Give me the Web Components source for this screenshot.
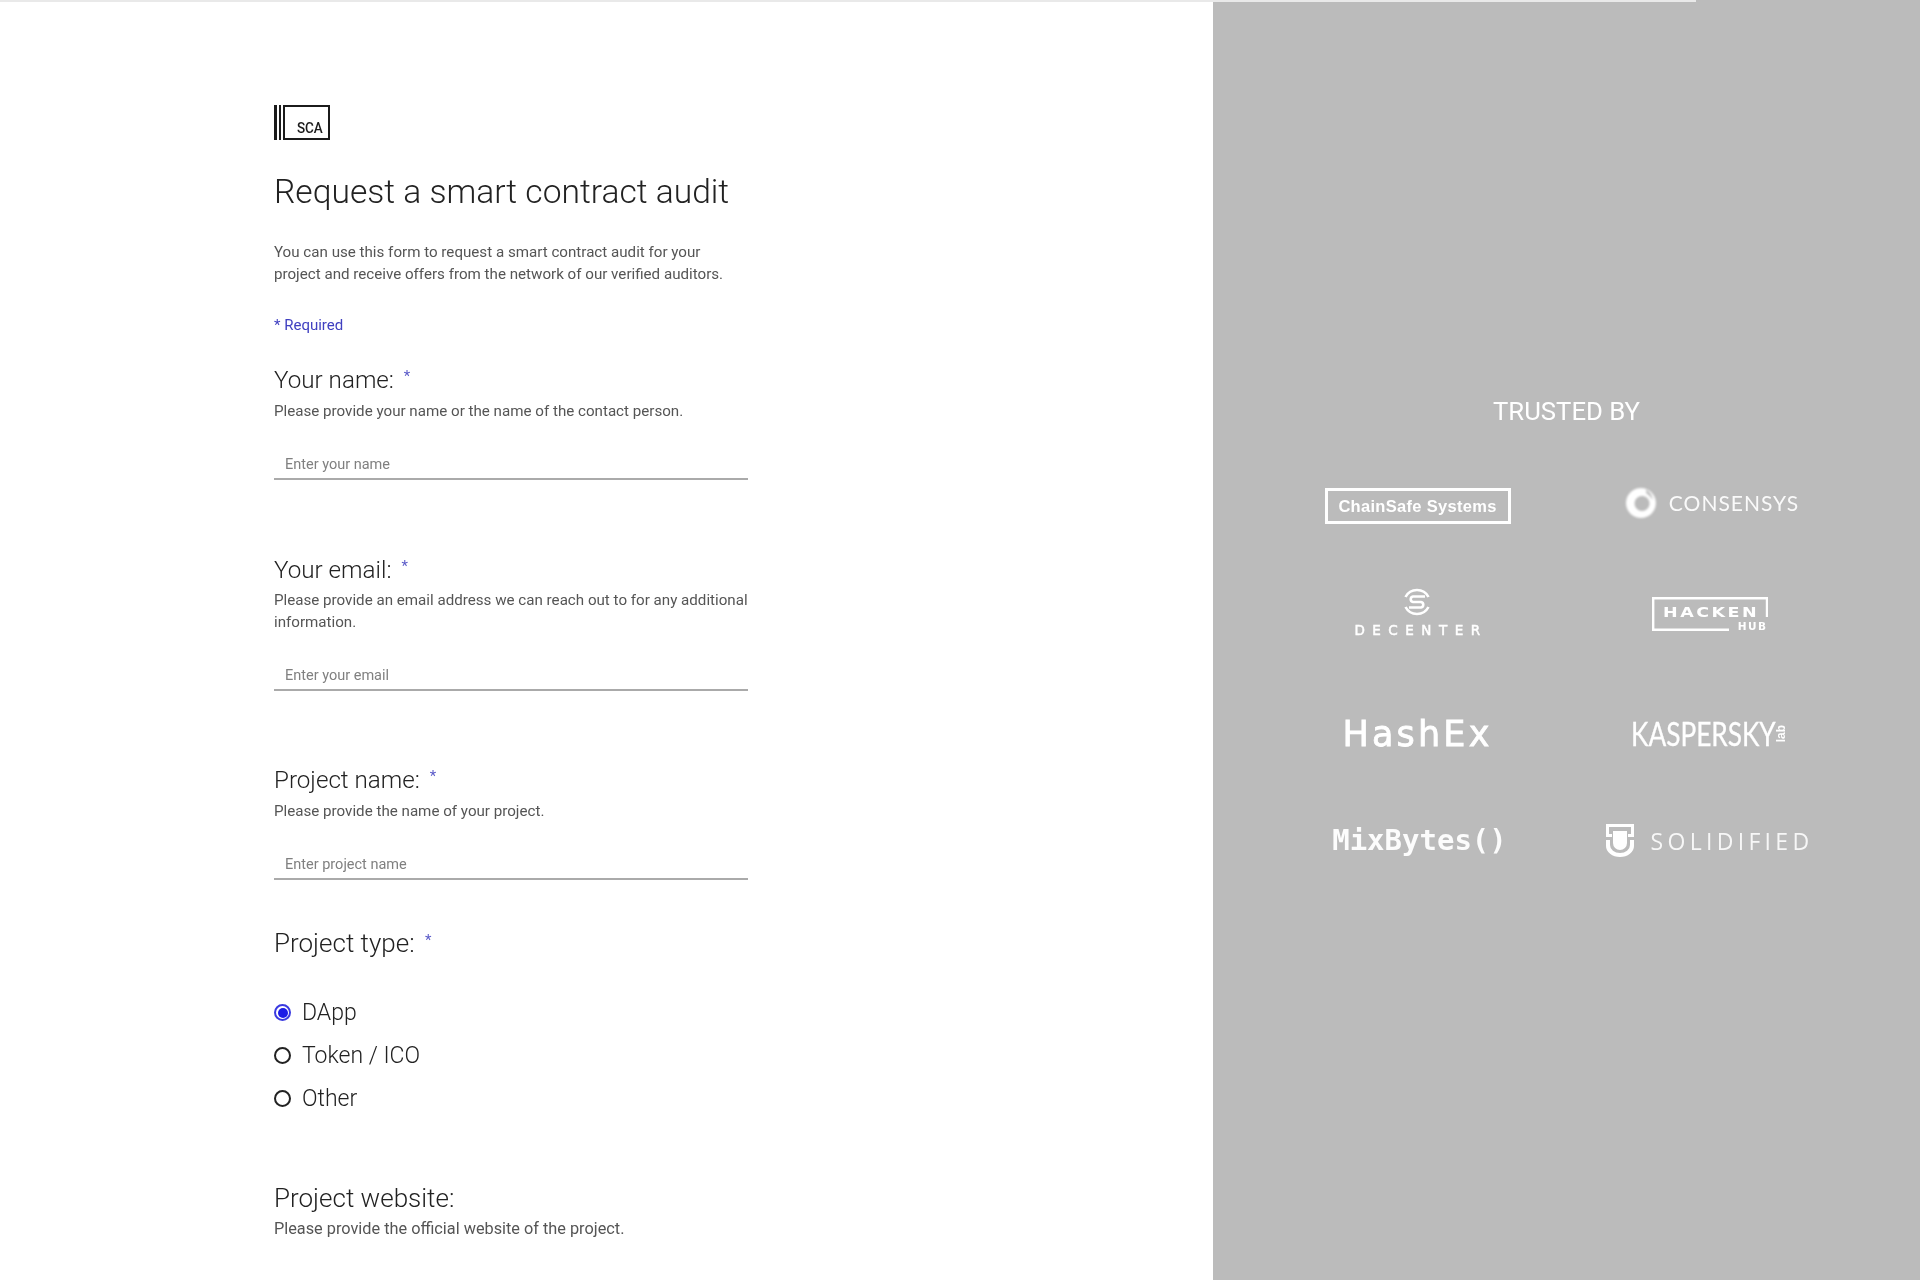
<!DOCTYPE html>
<html>
<head>
<meta charset="utf-8">
<title>Request a smart contract audit</title>
<style>
  html, body { margin: 0; height: 1280px; overflow: hidden; background: #fff; }
  body { font-family: Roboto, "Liberation Sans", sans-serif; }
</style>
</head>
<body>
<audit-page>
  <audit-form>
    <sca-logo></sca-logo>
    <form-field label="Your name:" required placeholder="Enter your name" style="--mt:28px;--after:74px">Please provide your name or the name of the contact person.</form-field>
    <form-field label="Your email:" required placeholder="Enter your email" style="--after:73px;--hint-mt:3px">Please provide an email address we can reach out to for any additional information.</form-field>
    <form-field label="Project name:" required placeholder="Enter project name" style="--after:47px">Please provide the name of your project.</form-field>
    <radio-group label="Project type:" required>
      <radio-option checked>DApp</radio-option>
      <radio-option>Token / ICO</radio-option>
      <radio-option>Other</radio-option>
    </radio-group>
    <form-field label="Project website:" no-input style="--after:0;--label:26px;--hint:16.3px">Please provide the official website of the project.</form-field>
  </audit-form>
  <trusted-panel>
    <trusted-logo name="chainsafe"></trusted-logo>
    <trusted-logo name="consensys"></trusted-logo>
    <trusted-logo name="decenter"></trusted-logo>
    <trusted-logo name="hacken"></trusted-logo>
    <trusted-logo name="hashex"></trusted-logo>
    <trusted-logo name="kaspersky"></trusted-logo>
    <trusted-logo name="mixbytes"></trusted-logo>
    <trusted-logo name="solidified"></trusted-logo>
  </trusted-panel>
</audit-page>

<script>
class AuditPage extends HTMLElement {
  constructor() {
    super();
    this.attachShadow({mode: 'open'}).innerHTML = `
      <style>
        :host { display: flex; position: relative; height: 1280px; overflow: hidden; }
        .bar { position: absolute; left: 0; top: 0; width: 1696px; height: 2px; background: #e9e9e9; z-index: 2; }
        ::slotted(audit-form) { flex: 0 0 1213px; }
        ::slotted(trusted-panel) { flex: 1; }
      </style>
      <div class="bar"></div>
      <slot></slot>
    `;
  }
}
customElements.define('audit-page', AuditPage);

class ScaLogo extends HTMLElement {
  constructor() {
    super();
    this.attachShadow({mode: 'open'}).innerHTML = `
      <style>
        :host { display: flex; width: 56px; height: 35px; }
        .stripe { width: 2.500px; background: #1b1b1b; margin-right: 2px; }
        .box { flex: 1; border: 2px solid #1b1b1b; display: flex; align-items: flex-end; justify-content: flex-end; padding: 0 5px 1px 0; box-sizing: border-box; }
        span { font: 500 15px/17px Roboto, sans-serif; color: #1b1b1b; transform: scaleX(.9); transform-origin: right; }
      </style>
      <div class="stripe"></div><div class="stripe"></div>
      <div class="box"><span>SCA</span></div>
    `;
  }
}
customElements.define('sca-logo', ScaLogo);

class AuditForm extends HTMLElement {
  constructor() {
    super();
    this.attachShadow({mode: 'open'}).innerHTML = `
      <style>
        :host { display: block; padding: 105px 0 0 274px; box-sizing: border-box; height: 1280px; overflow: hidden; background: #fff; filter: blur(.3px); }
        .col { width: 474px; }
        h1 { font: 300 33.600px/44px Roboto, sans-serif; color: #222; margin: 30px 0 0; }
        p { font: 400 15.150px/22px Roboto, sans-serif; color: #555; margin: 27px 0 0; }
        .req { font: 400 15px/22px Roboto, sans-serif; color: #4040c0; margin-top: 29px; }
      </style>
      <div class="col">
        <slot name="logo"></slot>
        <h1>Request a smart contract audit</h1>
        <p>You can use this form to request a smart contract audit for your project and receive offers from the network of our verified auditors.</p>
        <div class="req">* Required</div>
        <slot></slot>
      </div>
    `;
  }
  connectedCallback() {
    const logo = this.querySelector('sca-logo');
    if (logo) logo.slot = 'logo';
  }
}
customElements.define('audit-form', AuditForm);

class FormField extends HTMLElement {
  constructor() {
    super();
    this.attachShadow({mode: 'open'});
  }
  connectedCallback() {
    const req = this.hasAttribute('required') ? '<sup>*</sup>' : '';
    const input = this.hasAttribute('no-input') ? '' : `<div class="input"><span>${this.getAttribute('placeholder')}</span></div>`;
    this.shadowRoot.innerHTML = `
      <style>
        :host { display: block; margin-top: var(--mt, 0); margin-bottom: var(--after, 0); }
        .label { font: 300 var(--label, 24.200px)/32px Roboto, sans-serif; color: #222; }
        sup { font: 400 15px/1 Roboto, sans-serif; color: #5a5ac8; margin-left: 4px; position: relative; top: -7px; vertical-align: baseline; }
        .hint { font: 400 var(--hint, 15.150px)/22px Roboto, sans-serif; color: #555; margin-top: var(--hint-mt, 4px); }
        .input { margin-top: 28px; height: 28px; border-bottom: 2px solid #aaa; padding-left: 11px; }
        .input span { font: 400 14.500px/29px Roboto, sans-serif; color: #808080; display: block; }
      </style>
      <div class="label">${this.getAttribute('label')} ${req}</div>
      <div class="hint"><slot></slot></div>
      ${input}
    `;
  }
}
customElements.define('form-field', FormField);

class RadioGroup extends HTMLElement {
  constructor() {
    super();
    this.attachShadow({mode: 'open'});
  }
  connectedCallback() {
    const req = this.hasAttribute('required') ? '<sup>*</sup>' : '';
    this.shadowRoot.innerHTML = `
      <style>
        :host { display: block; margin-bottom: 67px; }
        .label { font: 300 26px/32px Roboto, sans-serif; color: #222; }
        sup { font: 400 15px/1 Roboto, sans-serif; color: #5a5ac8; margin-left: 4px; position: relative; top: -7px; vertical-align: baseline; }
        .opts { display: flex; flex-direction: column; gap: 11px; margin-top: 38px; }
      </style>
      <div class="label">${this.getAttribute('label')} ${req}</div>
      <div class="opts"><slot></slot></div>
    `;
  }
}
customElements.define('radio-group', RadioGroup);

class RadioOption extends HTMLElement {
  constructor() {
    super();
    this.attachShadow({mode: 'open'});
  }
  connectedCallback() {
    const dot = this.hasAttribute('checked');
    this.shadowRoot.innerHTML = `
      <style>
        :host { display: flex; align-items: center; gap: 11px; height: 32px; }
        .dot { width: 17px; height: 17px; margin-top: -1px; box-sizing: border-box; border-radius: 50%; border: 2px solid ${dot ? '#3a3ae0' : '#222'}; display: flex; align-items: center; justify-content: center; }
        .dot i { width: 10px; height: 10px; border-radius: 50%; background: #1c1ce6; display: ${dot ? 'block' : 'none'}; }
        span { font: 300 23px/32px Roboto, sans-serif; color: #222; }
      </style>
      <div class="dot"><i></i></div>
      <span><slot></slot></span>
    `;
  }
}
customElements.define('radio-option', RadioOption);

class TrustedPanel extends HTMLElement {
  constructor() {
    super();
    this.attachShadow({mode: 'open'}).innerHTML = `
      <style>
        :host { display: flex; flex-direction: column; align-items: center; justify-content: center; background: #bbb; height: 1280px; box-sizing: border-box; }
        h2 { font: 400 25.700px/28px Roboto, sans-serif; color: #fff; margin: 0 0 31px; filter: blur(.3px); }
        .grid { display: grid; grid-template-columns: 292px 292px; grid-template-rows: 100px 114px 128px 86px; justify-items: center; align-items: center; margin-right: 6px; filter: blur(.5px); }
      </style>
      <h2>TRUSTED BY</h2>
      <div class="grid"><slot></slot></div>
    `;
  }
}
customElements.define('trusted-panel', TrustedPanel);

const LOGOS = {
  chainsafe: `<div class="chainsafe">ChainSafe Systems</div>`,
  consensys: `<div class="row" style="gap:11px;margin-top:-5px;margin-left:4px">
      <svg width="34" height="34" viewBox="0 0 34 34" style="filter:blur(.8px)"><path fill="#fff" fill-rule="evenodd" d="M17 2a15 15 0 1 1-.1 0zM18 10a7.500 7.500 0 1 0 .1 0z"/><path fill="#bbb" d="M22 3.500c4 2.500 6.500 6 6.500 10.500-1.500-3-3.500-5-6-6.500z"/></svg>
      <span class="consensys">CONSENSYS</span></div>`,
  decenter: `<div class="col">
      <svg width="30" height="30" viewBox="0 0 30 30" fill="none" stroke="#fff" stroke-width="2.600"><path d="M3.500 10A13 13 0 0 1 26.500 10"/><path d="M3.500 20A13 13 0 0 0 26.500 20"/><path d="M23 9.500H11a2.800 2.800 0 0 0 0 5.500h8a2.800 2.800 0 0 1 0 5.500H7"/></svg>
      <span class="decenter">DECENTER</span></div>`,
  hacken: `<div class="hacken">
      <svg width="116" height="34" viewBox="0 0 116 34" fill="none" stroke="#fff" stroke-width="2.400"><path d="M115 20V1.200H1.200V32.800H77"/></svg>
      <span class="hk">HACKEN</span><span class="hub">HUB</span></div>`,
  hashex: `<span class="hashex">HashEx</span>`,
  kaspersky: `<div class="row" style="gap:2px"><span class="kasp">KASPERSKY</span><span class="lab">lab</span></div>`,
  mixbytes: `<span class="mix">MixBytes()</span>`,
  solidified: `<div class="row" style="gap:17px">
      <svg width="28" height="33" viewBox="0 0 28 33" fill="#fff"><path d="M0 0h28v3H0z"/><path d="M0 0h3v13H0z"/><path d="M25 0h3v13h-3z"/><path d="M0 10h6v3H0z"/><path d="M22 10h6v3h-6z"/><path d="M7 7h14v12a7 7 0 0 1-14 0z"/><path d="M0 16h4v5a10 8 0 0 0 20 0v-5h4v6a14 11 0 0 1-28 0z"/></svg>
      <span class="solid">SOLIDIFIED</span></div>`
};

class TrustedLogo extends HTMLElement {
  constructor() {
    super();
    this.attachShadow({mode: 'open'});
  }
  connectedCallback() {
    this.shadowRoot.innerHTML = `
      <style>
        :host { display: block; color: #fff; white-space: nowrap; }
        .row { display: flex; align-items: center; }
        .col { display: flex; flex-direction: column; align-items: center; gap: 5px; }
        .chainsafe { width: 186px; height: 36px; box-sizing: border-box; border: 3px solid #fff; font: 700 16.500px/30px "Liberation Sans", sans-serif; text-align: center; letter-spacing: .3px; }
        .consensys { font: 400 21px/28px Lato, sans-serif; letter-spacing: 1px; opacity: .92; }
        .decenter { font: 400 13.500px/16px "DejaVu Sans", sans-serif; letter-spacing: 7.500px; margin-right: -7px; -webkit-text-stroke: .5px #fff; }
        .hacken { position: relative; width: 116px; height: 34px; margin-top: 3px; }
        .hacken svg { display: block; }
        .hk { position: absolute; left: 11px; top: 6px; font: 700 14px/18px "DejaVu Sans", sans-serif; letter-spacing: 2px; transform: scaleX(1.25); transform-origin: left; }
        .hub { position: absolute; right: 0; bottom: -1px; font: 700 10.500px/12px "DejaVu Sans", sans-serif; letter-spacing: 1.500px; }
        .hashex { font: 400 35px/36px "DejaVu Sans", sans-serif; letter-spacing: 3.200px; -webkit-text-stroke: .8px #fff; }
        .kasp { font: 400 32px/36px Lato, sans-serif; display: inline-block; width: 141px; transform: scaleX(.82); transform-origin: left; -webkit-text-stroke: .3px #fff; }
        .lab { font: 700 12px/14px "Liberation Sans", sans-serif; writing-mode: vertical-rl; transform: rotate(180deg); }
        .mix { display: block; font: 700 29px/36px "DejaVu Sans Mono", monospace; opacity: .95; margin: -1px 0 0 4px; }
        .solid { font: 400 23px/34px "Open Sans", sans-serif; letter-spacing: 4.300px; opacity: .88; }
      </style>
      ${LOGOS[this.getAttribute('name')]}
    `;
  }
}
customElements.define('trusted-logo', TrustedLogo);
</script>
</body>
</html>
